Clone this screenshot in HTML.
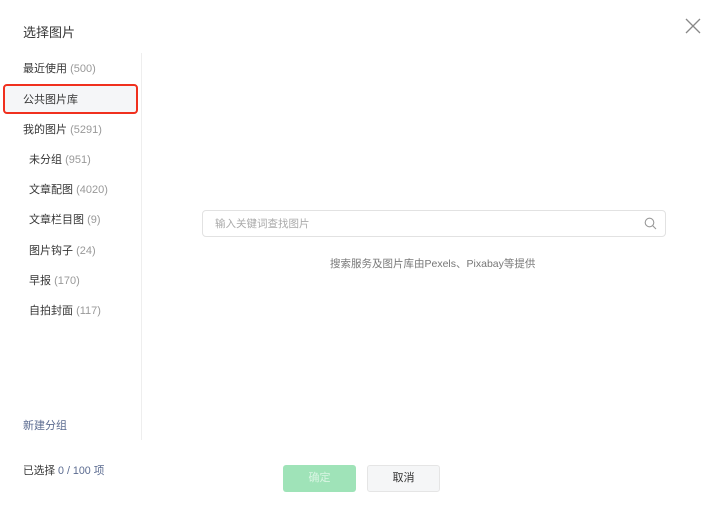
<!DOCTYPE html>
<html><head><meta charset="utf-8"><style>
*{margin:0;padding:0;box-sizing:border-box}
body{width:720px;height:514px;background:#fff;font-family:"Liberation Sans","Noto Sans CJK SC",sans-serif;color:#353535;position:relative;overflow:hidden;font-size:11px}
.a{position:absolute;white-space:nowrap}
.n{color:#999}
.item{position:absolute;left:23px;font-size:11px}
.sub{left:29px}
</style></head><body>
<div class="a" style="left:23px;top:22px;font-size:13px">选择图片</div>
<svg class="a" style="left:685px;top:18px" width="16" height="16" viewBox="0 0 16 16"><path d="M1 1L15 15M15 1L1 15" stroke="#888" stroke-width="1.3"/></svg>
<div class="a" style="left:141px;top:53px;width:1px;height:387px;background:#eee"></div>
<div class="item" style="top:60px">最近使用 <span class="n">(500)</span></div>
<div class="a" style="left:3px;top:84px;width:135px;height:30px;background:#f5f6f8;border:2px solid #f0301e;border-radius:4px"></div>
<div class="item" style="top:91px">公共图片库</div>
<div class="item" style="top:121px">我的图片 <span class="n">(5291)</span></div>
<div class="item sub" style="top:151px">未分组 <span class="n">(951)</span></div>
<div class="item sub" style="top:181px">文章配图 <span class="n">(4020)</span></div>
<div class="item sub" style="top:211px">文章栏目图 <span class="n">(9)</span></div>
<div class="item sub" style="top:242px">图片钩子 <span class="n">(24)</span></div>
<div class="item sub" style="top:272px">早报 <span class="n">(170)</span></div>
<div class="item sub" style="top:302px">自拍封面 <span class="n">(117)</span></div>
<div class="item" style="top:417px;color:#5b6b90">新建分组</div>
<div class="a" style="left:202px;top:210px;width:464px;height:27px;border:1px solid #e2e2e2;border-radius:4px"></div>
<div class="a" style="left:215px;top:216px;color:#aaa;font-size:10.5px">输入关键词查找图片</div>
<svg class="a" style="left:644px;top:217px" width="13" height="13" viewBox="0 0 13 13"><circle cx="5.5" cy="5.5" r="4.3" fill="none" stroke="#999" stroke-width="1.1"/><path d="M8.6 8.6L12 12" stroke="#999" stroke-width="1.1"/></svg>
<div class="a" style="left:330px;top:256px;color:#777;font-size:10.5px">搜索服务及图片库由Pexels、Pixabay等提供</div>
<div class="a" style="left:23px;top:463px;font-size:10.7px">已选择 <span style="color:#5b6b90">0 / 100 项</span></div>
<div class="a" style="left:283px;top:465px;width:73px;height:27px;background:#9fe3b8;border-radius:3px;color:#d9f5e3;text-align:center;line-height:27px">确定</div>
<div class="a" style="left:367px;top:465px;width:73px;height:27px;background:#f5f6f7;border:1px solid #e5e5e5;border-radius:3px;text-align:center;line-height:25px">取消</div>
</body></html>
